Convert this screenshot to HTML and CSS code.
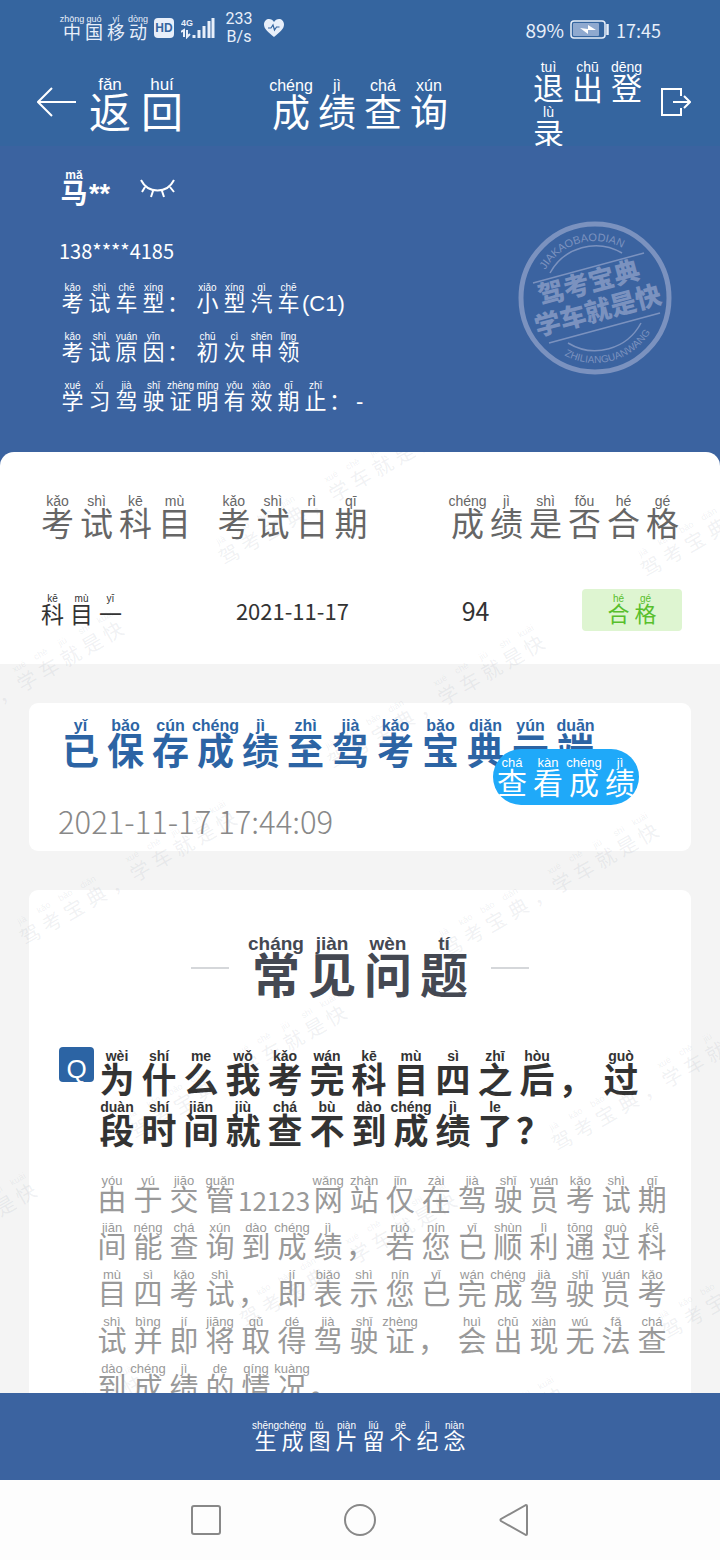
FILE: index.html
```
<!DOCTYPE html>
<html lang="zh-CN">
<head>
  <meta charset="UTF-8" />
  <meta name="viewport" content="width=device-width, initial-scale=1.0"/>
  <title>成绩查询</title>
  <link rel="stylesheet" href="styles.css">
</head>
<body>

  <!-- Status bar -->
  <div class="status-bar">
    <div class="status-left">
      <span class="carrier py"><ruby>中<rt>zhōng</rt></ruby><ruby>国<rt>guó</rt></ruby><ruby>移<rt>yí</rt></ruby><ruby>动<rt>dòng</rt></ruby></span>
      <span class="hd">HD</span>
      <svg class="signal" width="34" height="22" viewBox="0 0 34 22" aria-hidden="true">
        <text x="0" y="9" class="signal-label">4G</text>
        <path d="M0 15l3-2v7M6 13v7l3-3" fill="none" stroke="currentColor" stroke-width="2"/>
        <path d="M13 21v-3M18 21v-8M23 21V9M28 21V4M32 21V1" fill="none" stroke="currentColor" stroke-width="3"/>
      </svg>
      <span class="speed">233<br>B/s</span>
      <svg class="heart" width="22" height="20" viewBox="0 0 22 20" aria-hidden="true">
        <path d="M11 19C5 14 1 11 1 6.500C1 3 3.500 1 6 1C8 1 10 2 11 4C12 2 14 1 16 1C18.500 1 21 3 21 6.500C21 11 17 14 11 19Z" fill="currentColor"/>
        <path d="M5 10h3l2-3 1.500 5 2-3h3" fill="none" stroke="#35659f" stroke-width="1.200"/>
      </svg>
    </div>
    <div class="status-right">
      <span class="percent">89%</span>
      <svg width="40" height="20" viewBox="0 0 40 20" aria-hidden="true">
        <rect x="1" y="1" width="34" height="17" rx="3" fill="none" stroke="currentColor" stroke-width="1.500"/>
        <rect x="3" y="3" width="26" height="13" rx="1" fill="#8fa9cf"/>
        <path d="M37.500 4v11" stroke="currentColor" stroke-width="2.500"/>
        <path d="M10 8l8 1V5l8 5-8 0v4z" fill="#fff"/>
      </svg>
      <span>17:45</span>
    </div>
  </div>

  <!-- Header -->
  <header class="site-header">
    <button class="back" type="button">
      <svg width="40" height="30" viewBox="0 0 40 30" aria-hidden="true">
        <path d="M39 15H2M15 1L1 15l14 14" fill="none" stroke="currentColor" stroke-width="2"/>
      </svg>
      <span class="py"><ruby>返<rt>fǎn</rt></ruby><ruby>回<rt>huí</rt></ruby></span>
    </button>
    <h1 class="py"><ruby>成<rt>chéng</rt></ruby><ruby>绩<rt>jì</rt></ruby><ruby>查<rt>chá</rt></ruby><ruby>询<rt>xún</rt></ruby></h1>
    <button class="logout" type="button">
      <span class="py"><ruby>退<rt>tuì</rt></ruby><ruby>出<rt>chū</rt></ruby><ruby>登<rt>dēng</rt></ruby><ruby>录<rt>lù</rt></ruby></span>
      <svg width="30" height="30" viewBox="0 0 30 30" aria-hidden="true">
        <path d="M20 9V2H1v26h19v-7M12 15h16M23 9l6 6-6 6" fill="none" stroke="currentColor" stroke-width="2"/>
      </svg>
    </button>
  </header>

  <!-- Scrolling content -->
  <main>
    <div class="content">
      <div class="hero">
        <section class="profile">
          <div class="name">
            <span class="py"><ruby>马<rt>mǎ</rt></ruby>**</span>
            <button class="eye" type="button" aria-label="显示姓名">
              <svg width="36" height="20" viewBox="0 0 36 20" aria-hidden="true">
                <path d="M1 1C8 15 27 15 34 1M5 8l-3 5M13 12l-2 6M22 12l2 6M30 8l4 5" fill="none" stroke="currentColor" stroke-width="2"/>
              </svg>
            </button>
          </div>
          <p class="phone">138****4185</p>
          <div class="info py">
            <p><ruby>考<rt>kǎo</rt></ruby><ruby>试<rt>shì</rt></ruby><ruby>车<rt>chē</rt></ruby><ruby>型<rt>xíng</rt></ruby><span class="mark">：</span><ruby>小<rt>xiǎo</rt></ruby><ruby>型<rt>xíng</rt></ruby><ruby>汽<rt>qì</rt></ruby><ruby>车<rt>chē</rt></ruby>(C1)</p>
            <p><ruby>考<rt>kǎo</rt></ruby><ruby>试<rt>shì</rt></ruby><ruby>原<rt>yuán</rt></ruby><ruby>因<rt>yīn</rt></ruby><span class="mark">：</span><ruby>初<rt>chū</rt></ruby><ruby>次<rt>cì</rt></ruby><ruby>申<rt>shēn</rt></ruby><ruby>领<rt>lǐng</rt></ruby></p>
            <p><ruby>学<rt>xué</rt></ruby><ruby>习<rt>xí</rt></ruby><ruby>驾<rt>jià</rt></ruby><ruby>驶<rt>shǐ</rt></ruby><ruby>证<rt>zhèng</rt></ruby><ruby>明<rt>míng</rt></ruby><ruby>有<rt>yǒu</rt></ruby><ruby>效<rt>xiào</rt></ruby><ruby>期<rt>qī</rt></ruby><ruby>止<rt>zhǐ</rt></ruby><span class="mark">：</span>-</p>
          </div>
          <svg class="stamp" width="154" height="154" viewBox="0 0 154 154" aria-hidden="true">
            <defs>
              <path id="arc-top" d="M20 77A57 57 0 0 1 134 77"/>
              <path id="arc-bottom" d="M12 77A65 65 0 0 0 142 77"/>
            </defs>
            <circle cx="77" cy="77" r="74" fill="none" stroke="currentColor" stroke-width="5"/>
            <path d="M15 62L126 32M31 122L142 92M32 52A52 52 0 0 1 104 32M50 122A52 52 0 0 0 123 102" fill="none" stroke="currentColor" stroke-width="1.500"/>
            <text class="stamp-latin" transform="rotate(-16 77 77)"><textPath href="#arc-top" startOffset="50%">JIAKAOBAODIAN</textPath></text>
            <text class="stamp-latin small" transform="rotate(-15 77 77)"><textPath href="#arc-bottom" startOffset="50%">ZHILIANGUANWANG</textPath></text>
            <text class="stamp-name" transform="translate(71 62) rotate(-15)" y="9">驾考宝典</text>
            <text class="stamp-name" transform="translate(80 90) rotate(-15)" y="9">学车就是快</text>
          </svg>
        </section>

        <section class="scores">
          <table>
            <thead>
              <tr class="py">
                <th class="subject"><ruby>考<rt>kǎo</rt></ruby><ruby>试<rt>shì</rt></ruby><ruby>科<rt>kē</rt></ruby><ruby>目<rt>mù</rt></ruby></th>
                <th class="date"><ruby>考<rt>kǎo</rt></ruby><ruby>试<rt>shì</rt></ruby><ruby>日<rt>rì</rt></ruby><ruby>期<rt>qī</rt></ruby></th>
                <th class="result" colspan="2"><ruby>成<rt>chéng</rt></ruby><ruby>绩<rt>jì</rt></ruby><ruby>是<rt>shì</rt></ruby><ruby>否<rt>fǒu</rt></ruby><ruby>合<rt>hé</rt></ruby><ruby>格<rt>gé</rt></ruby></th>
              </tr>
            </thead>
            <tbody>
              <tr>
                <td class="subject py"><ruby>科<rt>kē</rt></ruby><ruby>目<rt>mù</rt></ruby><ruby>一<rt>yī</rt></ruby></td>
                <td class="date">2021-11-17</td>
                <td class="score">94</td>
                <td class="result"><span class="badge py"><ruby>合<rt>hé</rt></ruby><ruby>格<rt>gé</rt></ruby></span></td>
              </tr>
            </tbody>
          </table>
        </section>
      </div>

      <section class="card saved">
        <h2 class="py"><ruby>已<rt>yǐ</rt></ruby><ruby>保<rt>bǎo</rt></ruby><ruby>存<rt>cún</rt></ruby><ruby>成<rt>chéng</rt></ruby><ruby>绩<rt>jì</rt></ruby><ruby>至<rt>zhì</rt></ruby><ruby>驾<rt>jià</rt></ruby><ruby>考<rt>kǎo</rt></ruby><ruby>宝<rt>bǎo</rt></ruby><ruby>典<rt>diǎn</rt></ruby><ruby>云<rt>yún</rt></ruby><ruby>端<rt>duān</rt></ruby></h2>
        <time datetime="2021-11-17T17:44:09">2021-11-17 17:44:09</time>
        <button class="view py" type="button"><ruby>查<rt>chá</rt></ruby><ruby>看<rt>kàn</rt></ruby><ruby>成<rt>chéng</rt></ruby><ruby>绩<rt>jì</rt></ruby></button>
      </section>

      <section class="card faq">
        <h2 class="py"><ruby>常<rt>cháng</rt></ruby><ruby>见<rt>jiàn</rt></ruby><ruby>问<rt>wèn</rt></ruby><ruby>题<rt>tí</rt></ruby></h2>
        <div class="question">
          <span class="q">Q</span>
          <h3 class="py"><ruby>为<rt>wèi</rt></ruby><ruby>什<rt>shí</rt></ruby><ruby>么<rt>me</rt></ruby><ruby>我<rt>wǒ</rt></ruby><ruby>考<rt>kǎo</rt></ruby><ruby>完<rt>wán</rt></ruby><ruby>科<rt>kē</rt></ruby><ruby>目<rt>mù</rt></ruby><ruby>四<rt>sì</rt></ruby><ruby>之<rt>zhī</rt></ruby><ruby>后<rt>hòu</rt></ruby><span class="mark">，</span><ruby>过<rt>guò</rt></ruby><ruby>段<rt>duàn</rt></ruby><ruby>时<rt>shí</rt></ruby><ruby>间<rt>jiān</rt></ruby><ruby>就<rt>jiù</rt></ruby><ruby>查<rt>chá</rt></ruby><ruby>不<rt>bù</rt></ruby><ruby>到<rt>dào</rt></ruby><ruby>成<rt>chéng</rt></ruby><ruby>绩<rt>jì</rt></ruby><ruby>了<rt>le</rt></ruby><span class="mark">？</span></h3>
        </div>
        <p class="answer py"><ruby>由<rt>yóu</rt></ruby><ruby>于<rt>yú</rt></ruby><ruby>交<rt>jiāo</rt></ruby><ruby>管<rt>guǎn</rt></ruby><span class="num">12123</span><ruby>网<rt>wǎng</rt></ruby><ruby>站<rt>zhàn</rt></ruby><ruby>仅<rt>jǐn</rt></ruby><ruby>在<rt>zài</rt></ruby><ruby>驾<rt>jià</rt></ruby><ruby>驶<rt>shǐ</rt></ruby><ruby>员<rt>yuán</rt></ruby><ruby>考<rt>kǎo</rt></ruby><ruby>试<rt>shì</rt></ruby><ruby>期<rt>qī</rt></ruby><ruby>间<rt>jiān</rt></ruby><ruby>能<rt>néng</rt></ruby><ruby>查<rt>chá</rt></ruby><ruby>询<rt>xún</rt></ruby><ruby>到<rt>dào</rt></ruby><ruby>成<rt>chéng</rt></ruby><ruby>绩<rt>jì</rt></ruby><span class="mark">，</span><ruby>若<rt>ruò</rt></ruby><ruby>您<rt>nín</rt></ruby><ruby>已<rt>yǐ</rt></ruby><ruby>顺<rt>shùn</rt></ruby><ruby>利<rt>lì</rt></ruby><ruby>通<rt>tōng</rt></ruby><ruby>过<rt>guò</rt></ruby><ruby>科<rt>kē</rt></ruby><ruby>目<rt>mù</rt></ruby><ruby>四<rt>sì</rt></ruby><ruby>考<rt>kǎo</rt></ruby><ruby>试<rt>shì</rt></ruby><span class="mark">，</span><ruby>即<rt>jí</rt></ruby><ruby>表<rt>biǎo</rt></ruby><ruby>示<rt>shì</rt></ruby><ruby>您<rt>nín</rt></ruby><ruby>已<rt>yǐ</rt></ruby><ruby>完<rt>wán</rt></ruby><ruby>成<rt>chéng</rt></ruby><ruby>驾<rt>jià</rt></ruby><ruby>驶<rt>shǐ</rt></ruby><ruby>员<rt>yuán</rt></ruby><ruby>考<rt>kǎo</rt></ruby><ruby>试<rt>shì</rt></ruby><ruby>并<rt>bìng</rt></ruby><ruby>即<rt>jí</rt></ruby><ruby>将<rt>jiāng</rt></ruby><ruby>取<rt>qǔ</rt></ruby><ruby>得<rt>dé</rt></ruby><ruby>驾<rt>jià</rt></ruby><ruby>驶<rt>shǐ</rt></ruby><ruby>证<rt>zhèng</rt></ruby><span class="mark">，</span><ruby>会<rt>huì</rt></ruby><ruby>出<rt>chū</rt></ruby><ruby>现<rt>xiàn</rt></ruby><ruby>无<rt>wú</rt></ruby><ruby>法<rt>fǎ</rt></ruby><ruby>查<rt>chá</rt></ruby><ruby>到<rt>dào</rt></ruby><ruby>成<rt>chéng</rt></ruby><ruby>绩<rt>jì</rt></ruby><ruby>的<rt>de</rt></ruby><ruby>情<rt>qíng</rt></ruby><ruby>况<rt>kuàng</rt></ruby><span class="mark">。</span></p>
      </section>

      <!-- Watermark -->
      <svg class="watermark" aria-hidden="true">
        <defs>
          <g id="wm" transform="rotate(-30)">
            <text class="wm-zi" y="8" x="0 25 50 76 103 127 152 177 202 226">驾考宝典，学车就是快</text>
            <g class="wm-py">
              <text x="0" y="-13">jià</text><text x="25" y="-13">kǎo</text><text x="50" y="-13">bǎo</text><text x="76" y="-13">diǎn</text>
              <text x="127" y="-13">xué</text><text x="152" y="-13">chē</text><text x="177" y="-13">jiù</text><text x="202" y="-13">shì</text><text x="226" y="-13">kuài</text>
            </g>
          </g>
        </defs>
        <use href="#wm" transform="translate(229 408)"/>
        <use href="#wm" transform="translate(651 420)"/>
        <use href="#wm" transform="translate(-83 598)"/>
        <use href="#wm" transform="translate(338 612)"/>
        <use href="#wm" transform="translate(30 788)"/>
        <use href="#wm" transform="translate(452 800)"/>
        <use href="#wm" transform="translate(140 982)"/>
        <use href="#wm" transform="translate(562 994)"/>
        <use href="#wm" transform="translate(-170 1160)"/>
        <use href="#wm" transform="translate(250 1170)"/>
        <use href="#wm" transform="translate(672 1182)"/>
        <use href="#wm" transform="translate(-62 1352)"/>
        <use href="#wm" transform="translate(358 1364)"/>
      </svg>
    </div>
  </main>

  <!-- Bottom action -->
  <button class="make-picture py" type="button"><ruby>生<rt>shēng</rt></ruby><ruby>成<rt>chéng</rt></ruby><ruby>图<rt>tú</rt></ruby><ruby>片<rt>piàn</rt></ruby><ruby>留<rt>liú</rt></ruby><ruby>个<rt>gè</rt></ruby><ruby>纪<rt>jì</rt></ruby><ruby>念<rt>niàn</rt></ruby></button>

  <!-- System navigation -->
  <nav class="system-nav">
    <button type="button" aria-label="最近任务">
      <svg width="36" height="36" viewBox="0 0 36 36"><rect x="4" y="4" width="28" height="28" rx="2"/></svg>
    </button>
    <button type="button" aria-label="主屏幕">
      <svg width="36" height="36" viewBox="0 0 36 36"><circle cx="18" cy="18" r="15"/></svg>
    </button>
    <button type="button" aria-label="返回">
      <svg width="36" height="36" viewBox="0 0 36 36"><path d="M31 4v28q0 1-1 1L5 19q-1-1 0-2L30 3q1 0 1 1z"/></svg>
    </button>
  </nav>

</body>
</html>
```
FILE: styles.css
```
/* Reset & Base */
* { margin: 0; padding: 0; box-sizing: border-box; }
body {
  height: 100vh;
  display: flex;
  flex-direction: column;
  overflow: hidden;
  font-family: "Noto Sans CJK SC", sans-serif;
  background: #f4f4f4;
  color: #333;
}
button {
  font: inherit;
  color: inherit;
  background: none;
  border: none;
  cursor: pointer;
}
svg { display: block; flex-shrink: 0; }

/* Characters with pinyin above: --zi glyph size, --cell width, --rt pinyin size */
.py {
  font-family: "Liberation Sans", "Noto Sans CJK SC", sans-serif;
  font-size: var(--zi);
  line-height: 1;
}
.py ruby {
  display: inline-flex;
  flex-direction: column-reverse;
  align-items: center;
  vertical-align: bottom;
  width: var(--cell);
  margin-top: var(--gap, 0);
  line-height: 1;
}
.py rt {
  display: block;
  font-size: var(--rt);
  line-height: 1;
  white-space: nowrap;
}
.mark { display: inline-block; vertical-align: bottom; width: var(--cell); }

/* Status bar */
.status-bar {
  display: flex;
  justify-content: space-between;
  align-items: center;
  height: 60px;
  padding: 0 59px 4px 61px;
  background: #35659f;
  color: #e8effa;
}
.status-left, .status-right { display: flex; align-items: center; }
.carrier { --zi: 18px; --cell: 22px; --rt: 9px; white-space: nowrap; }
.hd {
  margin-left: 5px;
  width: 20px;
  height: 20px;
  border-radius: 4px;
  background: #e8effa;
  color: #35659f;
  font: bold 12px/20px "Liberation Sans", sans-serif;
  text-align: center;
}
.signal { margin-left: 7px; }
.signal-label { font: bold 9px "Liberation Sans", sans-serif; fill: currentColor; }
.speed {
  width: 48px;
  font: 16px/18px Roboto, sans-serif;
  text-align: center;
}
.status-right { gap: 6px; font-size: 18px; line-height: 20px; padding-top: 4px; }
.percent { font-size: 19px; }

/* Header */
.site-header {
  display: grid;
  grid-template-columns: 1fr auto 1fr;
  align-items: center;
  height: 86px;
  padding: 0 29px 4px;
  background: #35659f;
  color: #fff;
}
.site-header h1 { --zi: 38px; --cell: 46px; --rt: 16px; font-weight: 400; }
.back { display: flex; align-items: center; gap: 7px; justify-self: start; padding-left: 8px; }
.back svg { margin-bottom: 6px; }
.back .py { --zi: 42px; --cell: 52px; --rt: 17px; }
.logout { display: flex; align-items: center; gap: 15px; justify-self: end; }
.logout svg { margin-bottom: 6px; }
.logout .py { --zi: 31px; --cell: 39px; --rt: 14px; width: 117px; text-align: left; }

/* Scrolling content */
main { flex: 1; min-height: 0; overflow-y: auto; scrollbar-width: none; }
.content { position: relative; overflow: hidden; padding-bottom: 39px; }
.hero { background: #3b63a0; }

/* Profile */
.profile { position: relative; padding: 23px 59px 39px; color: #fff; }
.name { display: flex; align-items: center; gap: 30px; }
.name .py { --zi: 27px; --cell: 30px; --rt: 12px; font-weight: bold; }
.phone { margin-top: 30px; font-size: 20px; line-height: 25px; }
.info {
  --zi: 22px; --cell: 27px; --rt: 10px;
  display: flex;
  flex-direction: column;
  gap: 17px;
  margin-top: 20px;
}
.stamp { position: absolute; top: 75px; right: 48px; color: #7b92bf; }
.stamp-latin { font: 11px "Liberation Sans", sans-serif; fill: currentColor; text-anchor: middle; }
.stamp-latin.small { font-size: 10px; }
.stamp-name { font: 900 26px "Noto Sans CJK SC", sans-serif; fill: currentColor; text-anchor: middle; }

/* Score table */
.scores { background: #fff; border-radius: 14px 14px 0 0; padding: 42px 38px 33px; }
.scores table { width: 100%; border-collapse: collapse; table-layout: fixed; }
.scores th { font-weight: 400; color: #666; padding-bottom: 48px; }
.scores thead .py, .scores thead.py, .scores tr.py { --zi: 33px; --cell: 39px; --rt: 14px; }
.scores .subject { width: 27%; text-align: left; white-space: nowrap; }
.scores .date { width: 25%; text-align: center; white-space: nowrap; }
.scores .result { text-align: right; white-space: nowrap; }
.scores td { vertical-align: middle; line-height: 1; }
.scores td.subject { --zi: 23px; --cell: 29px; --rt: 10px; }
.scores td.date { font-size: 22px; }
.scores td.score { font-size: 25px; text-align: right; padding-right: 38px; }
.badge {
  --zi: 22px; --cell: 27px; --rt: 10px;
  display: flex;
  justify-content: center;
  align-items: center;
  width: 100px;
  height: 42px;
  margin-left: auto;
  border-radius: 4px;
  background: #def5d1;
  color: #58bf2c;
}

/* Cards */
.card { margin: 39px 29px 0; background: #fff; border-radius: 9px; }
.saved { position: relative; padding: 15px 29px 12px; }
.saved h2 { --zi: 37px; --cell: 45px; --rt: 16px; color: #2c64a4; }
.saved time {
  display: block;
  margin-top: 32px;
  font-size: 31px;
  font-weight: 300;
  line-height: 36px;
  color: #888;
}
.view {
  --zi: 30px; --cell: 36px; --rt: 13px;
  position: absolute;
  top: 46px;
  right: 52px;
  width: 146px;
  height: 56px;
  border-radius: 28px;
  background: #1fa9f9;
  color: #fff;
  white-space: nowrap;
}

/* FAQ */
.faq { padding: 44px 16px 20px 30px; }
.faq h2 {
  --zi: 48px; --cell: 56px; --rt: 19px;
  display: flex;
  justify-content: center;
  align-items: center;
  padding-right: 14px;
  color: #444852;
}
.faq h2::before, .faq h2::after {
  content: "";
  width: 38px;
  height: 2px;
  margin: 0 19px;
  background: #d5d7da;
}
.question { display: flex; gap: 2px; margin-top: 46px; }
.q {
  flex-shrink: 0;
  width: 35px;
  height: 35px;
  border-radius: 4px;
  overflow: hidden;
  background: #2c64a4;
  color: #fff;
  font: 26px/44px "Liberation Sans", sans-serif;
  text-align: center;
}
.question h3 { --zi: 35px; --cell: 42px; --rt: 14px; --gap: 2px; }
.answer {
  --zi: 29px; --cell: 36px; --rt: 13px; --gap: 5px;
  padding-left: 35px;
  margin-top: 20px;
  color: #999;
}
.num { font-family: "Noto Sans CJK SC", sans-serif; font-size: 26px; }

/* Watermark, kept off the blue profile area */
.watermark {
  position: absolute;
  top: 0;
  left: 0;
  width: 100%;
  height: 100%;
  clip-path: inset(306px 0 0 0);
  pointer-events: none;
  fill: rgba(110, 120, 140, .1);
}
.wm-zi { font: 20px "Noto Sans CJK SC", sans-serif; text-anchor: middle; }
.wm-py { font: 9px "Liberation Sans", sans-serif; text-anchor: middle; }

/* Bottom action */
.make-picture {
  --zi: 22px; --cell: 27px; --rt: 10px;
  flex-shrink: 0;
  height: 87px;
  background: #3b63a0;
  color: #fff;
}

/* System navigation */
.system-nav {
  flex-shrink: 0;
  display: flex;
  justify-content: center;
  align-items: center;
  gap: 118px;
  height: 80px;
  background: #fdfdfd;
}
.system-nav svg { fill: none; stroke: #888; stroke-width: 2; }
```
